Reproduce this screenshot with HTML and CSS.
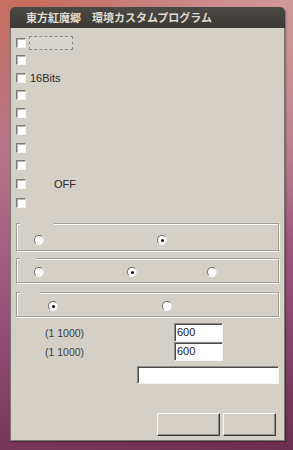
FILE: index.html
```html
<!DOCTYPE html>
<html lang="ja">
<head>
    <meta charset="UTF-8">
    <title>東方紅魔郷　環境カスタムプログラム</title>
    <link rel="stylesheet" href="styles.css">
</head>
<body>
    <div class="window">
        <div class="titlebar">東方紅魔郷　環境カスタムプログラム</div>

        <div class="client">
            <!-- check boxes -->
            <div class="checks">
                <div class="check-row"><span class="checkbox"></span><span class="focus-box"></span></div>
                <div class="check-row"><span class="checkbox"></span></div>
                <div class="check-row"><span class="checkbox"></span><span class="label">16Bits</span></div>
                <div class="check-row"><span class="checkbox"></span></div>
                <div class="check-row"><span class="checkbox"></span></div>
                <div class="check-row"><span class="checkbox"></span></div>
                <div class="check-row"><span class="checkbox"></span></div>
                <div class="check-row"><span class="checkbox"></span></div>
                <div class="check-row tall"><span class="checkbox"></span><span class="label label-off">OFF</span></div>
                <div class="check-row tall"><span class="checkbox"></span></div>
            </div>

            <!-- radio groups -->
            <div class="group group-a">
                <span class="radio-item"><span class="radio"></span></span>
                <span class="radio-item"><span class="radio checked"></span></span>
            </div>
            <div class="group group-b">
                <span class="radio-item"><span class="radio"></span></span>
                <span class="radio-item"><span class="radio checked"></span></span>
                <span class="radio-item"><span class="radio"></span></span>
            </div>
            <div class="group group-c">
                <span class="radio-item"><span class="radio checked"></span></span>
                <span class="radio-item"><span class="radio"></span></span>
            </div>

            <!-- numeric fields -->
            <div class="field-row">
                <span class="range">(1 1000)</span>
                <span class="edit">600</span>
            </div>
            <div class="field-row">
                <span class="range">(1 1000)</span>
                <span class="edit">600</span>
            </div>
            <div class="wide-row">
                <span class="edit edit-wide"></span>
            </div>

            <!-- buttons -->
            <div class="buttons">
                <span class="button button-ok"></span>
                <span class="button button-cancel"></span>
            </div>
        </div>
    </div>
</body>
</html>
```

FILE: styles.css
```css
/* Desktop background */
body {
    margin: 0;
    width: 293px;
    height: 450px;
    overflow: hidden;
    font-family: 'Liberation Sans', Arial, sans-serif;
    background:
        radial-gradient(circle at 100% 0%, #d09a9e 0%, rgba(208, 154, 158, 0) 45%),
        linear-gradient(172deg, #c76e5e 0%, #b7768a 30%, #965078 65%, #6c2e4e 100%);
}

/* Window frame */
.window {
    margin: 7px 0 0 10px;
    width: 275px;
    box-shadow: 1px 1px 2px rgba(0, 0, 0, 0.35);
    border-radius: 5px 5px 0 0;
}

.titlebar {
    height: 21px;
    line-height: 20px;
    padding-left: 16px;
    border-radius: 5px 5px 0 0;
    background: linear-gradient(#4a4944, #3a3935);
    color: #dfdbd2;
    font-family: 'Noto Sans CJK JP', sans-serif;
    font-size: 11px;
    font-weight: bold;
    letter-spacing: 0;
}

.client {
    box-sizing: border-box;
    height: 413px;
    padding-top: 6px;
    background: #d4d0c8;
    border: 1px solid #77766f;
    border-top: none;
}

/* Check boxes */
.check-row {
    height: 17.5px;
    display: flex;
    align-items: center;
    padding-left: 5px;
}

.check-row.tall {
    height: 19px;
}

.checkbox {
    box-sizing: border-box;
    width: 10px;
    height: 10px;
    background: #fff;
    border: 1px solid;
    border-color: #7c7b78 #f2f2f2 #f2f2f2 #7c7b78;
    box-shadow: inset 1px 1px 0 #b8b5ae;
}

.focus-box {
    box-sizing: border-box;
    width: 44px;
    height: 14px;
    margin-left: 3px;
    border: 1px dashed #8c8a86;
    background: #d9d6d0;
}

.label {
    margin-left: 4px;
    font-size: 11px;
    color: #2a2a2a;
}

.label-off {
    margin-left: 28px;
}

/* Group boxes */
.group {
    position: relative;
    box-sizing: border-box;
    display: grid;
    align-items: start;
    margin-left: 5px;
    width: 263px;
    height: 25px;
    padding-top: 8px;
    border: 1px solid #a29f99;
    box-shadow: inset 1px 1px 0 #fbfbfa, 1px 1px 0 #fbfbfa;
}

.group::before {
    content: '';
    position: absolute;
    top: -1px;
    left: 3px;
    height: 2px;
    width: var(--gap);
    background: #d4d0c8;
}

.group-a {
    --gap: 34px;
    margin-top: 11px;
    height: 28px;
    padding-top: 11px;
    padding-left: 17px;
    grid-template-columns: 123px auto;
}

.group-b {
    --gap: 17px;
    margin-top: 7px;
    padding-left: 17px;
    grid-template-columns: 93px 80px auto;
}

.group-c {
    --gap: 20px;
    margin-top: 9px;
    padding-left: 31px;
    grid-template-columns: 114px auto;
}

.radio-item {
    display: flex;
}

.radio {
    box-sizing: border-box;
    width: 10px;
    height: 10px;
    border-radius: 50%;
    background: #fff;
    border: 1px solid;
    border-color: #6f6e6a #e8e6e2 #ffffff #6f6e6a;
    display: flex;
    align-items: center;
    justify-content: center;
}

.radio.checked::after {
    content: '';
    width: 3px;
    height: 3px;
    border-radius: 50%;
    background: #111;
}

/* Numeric fields */
.field-row {
    display: grid;
    grid-template-columns: 129px 49px;
    align-items: center;
    padding-left: 34px;
    height: 19px;
}

.field-row:first-of-type {
    margin-top: 0;
}

.group-c + .field-row {
    margin-top: 6px;
}

.range {
    font-size: 10.5px;
    color: #3c3c3c;
}

.edit {
    box-sizing: border-box;
    height: 19px;
    padding-left: 2px;
    background: #fff;
    border: 1px solid;
    border-color: #8a8985 #f6f6f6 #f6f6f6 #8a8985;
    box-shadow: inset 1px 1px 0 #4a4a48;
    font-size: 11px;
    line-height: 17px;
    color: #222;
}

.wide-row {
    margin-top: 5px;
    padding-left: 126px;
}

.edit-wide {
    display: block;
    width: 142px;
    height: 18px;
}

/* Buttons */
.buttons {
    display: flex;
    justify-content: flex-end;
    gap: 3px;
    margin-top: 29px;
    padding-right: 8px;
}

.button {
    box-sizing: border-box;
    height: 23px;
    background: #d4d0c8;
    border: 1px solid;
    border-color: #fbfbf9 #3e3e3c #3e3e3c #fbfbf9;
    box-shadow: inset -1px -1px 0 #8e8c86;
}

.button-ok {
    width: 63px;
}

.button-cancel {
    width: 53px;
}
```
